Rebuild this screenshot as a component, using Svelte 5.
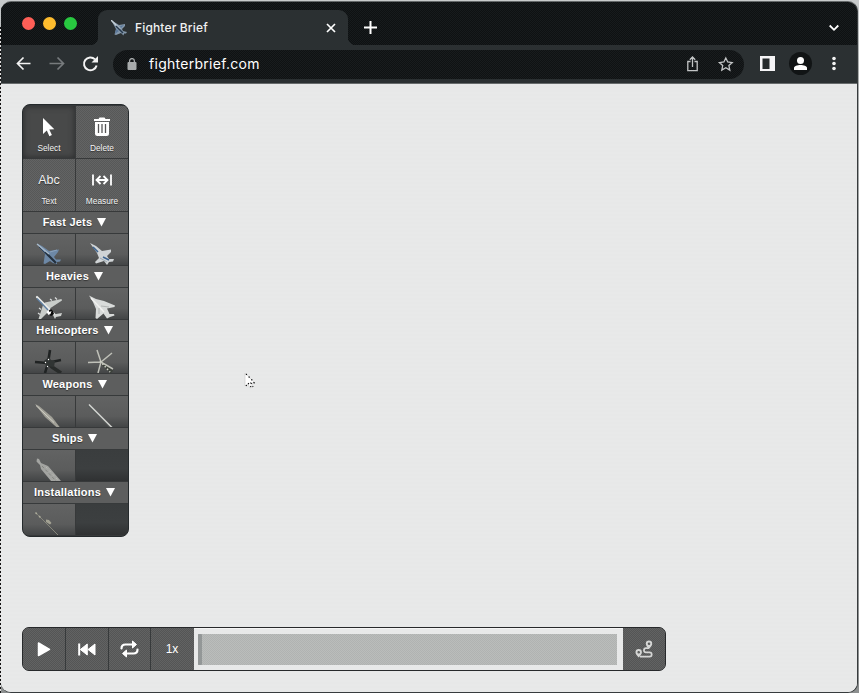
<script>
  const groups = [
    { name: 'Fast Jets', items: ['jet', 'jet2'] },
    { name: 'Heavies', items: ['airliner', 'bomber'] },
    { name: 'Helicopters', items: ['heli', 'heli2'] },
    { name: 'Weapons', items: ['missile', 'missile2'] },
    { name: 'Ships', items: ['carrier', null] },
    { name: 'Installations', items: ['site', null] }
  ];
</script>

<div class="desktop">
  <div class="window">
    <header class="tabs">
      <div class="lights"><i class="red"></i><i class="yellow"></i><i class="green"></i></div>
      <div class="tab">
        <svg class="favicon" width="16" height="16" viewBox="0 0 16 16"><path fill="#8497aa" d="M0 0 8 5 14 4 14 6 11 9 12 11 16 12 15 13.500 13 13.500 12.500 15.500 10 13 5 15 3.500 14.500 5 9Z"/><path fill="#5b789a" d="m5 9 3 2-4 3ZM9 6l4-1-3 3Z"/><path stroke="#c5cfd6" stroke-width="1.400" d="m0 0 9 9"/><path stroke="#26394d" stroke-width="1.500" d="m5 6 7 7"/></svg>
        <span class="title">Fighter Brief</span>
        <svg class="close" width="10" height="10" viewBox="0 0 10 10"><path d="m1 1 8 8M9 1 1 9" stroke="#fff" stroke-width="1.700"/></svg>
      </div>
      <svg class="plus" width="13" height="13" viewBox="0 0 13 13"><path d="M6.500 0v13M0 6.500h13" stroke="#fff" stroke-width="2"/></svg>
      <svg class="chev" width="10" height="8" viewBox="0 0 10 8"><path d="m.7 1.500 4.300 4.300 4.300-4.300" fill="none" stroke="#fff" stroke-width="1.800"/></svg>
    </header>
    <nav class="toolbar">
      <svg width="110" height="38" viewBox="0 0 110 38" fill="none" stroke-width="1.700">
        <path d="M29.500 18.500H17M22.500 12.500l-6 6 6 6" stroke="#f3f3f3"/>
        <path d="M48.500 18.500H62M56.500 12.500l6 6-6 6" stroke="#777b7d"/>
        <path d="M94 14.400a6.400 6.400 0 1 0 1.600 6" stroke="#f3f3f3" stroke-width="2"/><path fill="#f3f3f3" d="M97 11v6.500h-6.500Z"/>
      </svg>
      <div class="address">
        <svg class="lock" width="10" height="12" viewBox="0 0 10 12"><rect x=".5" y="4" width="9" height="8" rx="1" fill="#a8abac"/><path d="M2.600 5V3a2.400 2.400 0 0 1 4.800 0v2" fill="none" stroke="#a8abac" stroke-width="1.300"/></svg>
        <span>fighterbrief.com</span>
        <svg class="pageacts" width="56" height="28" viewBox="0 0 56 28" fill="none" stroke="#c3c5c6" stroke-width="1.300"><path d="M5.500 11.500H2.800v9.200h9.400v-9.200H9.500M7.500 17V7M4.800 9.700 7.500 7l2.700 2.700"/><path d="m40.800 8 1.900 4 4.500.6-3.300 3 .9 4.500-4-2.300-4 2.300.9-4.500-3.300-3 4.500-.6Z"/></svg>
      </div>
      <svg class="right" width="112" height="38" viewBox="0 0 112 38">
        <path fill="#f5f4f6" d="M15 11h15v15H15Z"/><path fill="#25292b" d="M17.500 13.500h7v10.500h-7Z"/>
        <circle cx="55.500" cy="18.500" r="11.500" fill="#111415"/><circle cx="55.500" cy="15.600" r="3.500" fill="#fff"/><path fill="#fff" d="M49 25v-2c0-4 13-4 13 0v2Z"/>
        <g fill="#f2f2f2"><circle cx="89" cy="13.500" r="1.800"/><circle cx="89" cy="18.500" r="1.800"/><circle cx="89" cy="23.500" r="1.800"/></g>
      </svg>
    </nav>
    <main>
      <aside class="palette">
        <div class="pair tools">
          <button class="selected"><svg width="52" height="52" viewBox="0 0 52 52"><path fill="#fff" d="M20 12v16l3.800-3.500 2.600 5.800 2.500-1.200-2.600-5.600 5-.3Z"/></svg><span>Select</span></button>
          <button><svg width="52" height="52" viewBox="0 0 52 52"><path fill="#fff" d="M18 13h4.500l1-1.500h5l1 1.500H34v2H18ZM19 16h14v11.500q0 2.500-2.500 2.500h-9Q19 30 19 27.500Z"/><path stroke="#555" stroke-width="1.300" d="M22.500 18v9M26 18v9M29.500 18v9"/></svg><span>Delete</span></button>
        </div>
        <div class="pair tools">
          <button><b>Abc</b><span>Text</span></button>
          <button><svg width="52" height="52" viewBox="0 0 52 52" fill="none" stroke="#fff" stroke-width="1.800"><path d="M17 15.500v11M35 15.500v11M20.500 21h11M24.500 17l-4 4 4 4M27.500 17l4 4-4 4"/></svg><span>Measure</span></button>
        </div>
        {#each groups as group}
          <section>
            <h2>{group.name}<svg width="9" height="9" viewBox="0 0 9 9"><path d="M0 0h9L4.500 8.500Z" fill="#fff"/></svg></h2>
            <div class="pair craft">
              {#each group.items as item}
                <button class:empty={!item}>
                  <svg width="52" height="31" viewBox="0 0 52 31" fill="none">
                    {#if item === 'jet'}
                      <path fill="#6d88a6" d="M14 9.500 19 12 26 17 36 15.500 35 18 31 23 33 25.500 38 25.500 37 27.500 34 28 34 30 30 29 27 27 22 30 20.500 29.500 22 20Z"/><path stroke="#23303e" stroke-width="2.200" d="m22 18 11 11"/><path stroke="#a9bac9" stroke-width="1.300" d="m14 10 12 10"/><path stroke="#2f445d" d="m16 13 8 8"/><path stroke="#8ba3bd" d="m27 18 7-2"/>
                    {:else if item === 'jet2'}
                      <path fill="#d0d4d6" d="M14 9 20 12 26 17 35 15.500 35 18 31 22 33 25 38 25 37 27.500 33 28 31 31 28 27 20 29.500 19 28 23 24 21 19Z"/><path stroke="#3e648f" stroke-width="1.600" d="m17 13 5 5M27 23l6 3"/><path stroke="#9ba9b4" d="m24 24 7 4"/>
                    {:else if item === 'airliner'}
                      <path fill="#c9cdca" d="M22 14.500 38.500 11 39 12.500 27.500 20 26 23 18 31 15.500 31 20 17Z"/><path fill="#ced1cf" d="m29 25 4 1 6-1-1 3-5 1-1 2Z"/><path stroke="#e8eae8" stroke-width="2.200" stroke-linecap="round" d="m14 9 17 17"/><path stroke="#5c7da0" stroke-width="1.300" d="m14 10.500 11 11.500"/><path stroke="#dadddd" stroke-width="1.200" d="m27 11 2 1.500M32 9.500l2 2M16 20l2 1.500M15 25l2 1.500"/><path fill="#090909" d="m25 23 3-2 2 2 1 3-3 2-3-2Z"/><path fill="#fff" d="m23.500 24 2-2 1 2 2-1-1 3-2 1Z"/>
                    {:else if item === 'bomber'}
                      <path fill="#d9dbda" d="M13 7.500 20 11 28 13 39 17.500 38.500 19 31 20.500 33.500 26 38 26 38.500 27.500 34 29 31 30.500 27.500 25.500 21 31 19.500 30 20 21 17 14Z"/><path stroke="#f1f1ef" stroke-width="1.500" d="m15 10 13 14"/><path stroke="#b1b4b3" d="m25 18 8 1M23 20v6"/>
                    {:else if item === 'heli'}
                      <path stroke="#202323" stroke-width="2.600" d="M12 20 24 21 38 18M27 8 25 21 22 31"/><path stroke="#282b2a" stroke-width="3.600" d="m22 19 7 6 9 6"/><path fill="#303433" d="m21 19 5-4 2 3 4 1-1 6-8-1Z"/><g fill="#fff"><circle cx="22.500" cy="20.500" r=".7"/><circle cx="24.500" cy="24.500" r=".7"/><circle cx="25.500" cy="17.500" r=".7"/></g>
                    {:else if item === 'heli2'}
                      <path stroke="#3c413b" stroke-width="3.600" d="m24 19 12 11"/><path stroke="#bfc0b8" stroke-width="1.500" d="M12 20.500 25 20 36 11M21 8 25 20 22 31M25 20l12 7"/><path stroke="#d0d3c8" stroke-width="1.600" stroke-dasharray="1.500 2" d="m24 19 10 11"/>
                    {:else if item === 'missile'}
                      <path fill="#a2a198" d="m12 8 4 2L29 21l8 10.500-2.500.5L22 21Z"/><path stroke="#d0cfc5" d="m13 9.500 18 17"/>
                    {:else if item === 'missile2'}
                      <path stroke="#555958" stroke-width="1.200" d="m12 9.500 23 22.500"/><path stroke="#d4d5d2" stroke-width="1.500" d="m13 8.500 23 23"/>
                    {:else if item === 'carrier'}
                      <path fill="#a3a4a1" d="m14 8.500 2 .5 2 4 7 3 13 15H28L18 19l-1-4-3.500-3.500Z"/><path stroke="#838580" stroke-dasharray="3 2" d="m19 16 14 15"/><path stroke="#b9bab4" stroke-dasharray="2 3" d="m23 17 12 13"/>
                    {:else if item === 'site'}
                      <path stroke="#85857a" d="m13 9 22 22"/><path stroke="#aeae9d" stroke-width="1.500" stroke-dasharray="2 3" d="m12.500 8.500 5 5"/><path fill="#a3a293" d="m23 15.500 3 .5 2.500 3-1.500 1.500-4-2.500Z"/>
                    {/if}
                  </svg>
                </button>
              {/each}
            </div>
          </section>
        {/each}
      </aside>
      <footer class="player">
        <button><svg width="42" height="42" viewBox="0 0 42 42"><path fill="#fff" stroke="#fff" stroke-width="1.500" stroke-linejoin="round" d="M15.500 15v12.500l11-6.200Z"/></svg></button>
        <button><svg width="42" height="42" viewBox="0 0 42 42"><path fill="#fff" stroke="#fff" stroke-linejoin="round" d="M21.300 16v11l-7-5.500ZM29 16v11l-7-5.500Z"/><path stroke="#fff" stroke-width="2" d="M13.200 15.500v12"/></svg></button>
        <button class="loop"><svg width="41" height="42" viewBox="0 0 41 42"><path d="M12.500 20.500c0-3 2-4 4-4h7M28.500 21.500c0 3-2 4-4 4h-7" fill="none" stroke="#fff" stroke-width="2.200" stroke-linecap="round"/><path fill="#fff" stroke="#fff" stroke-linejoin="round" d="m23.500 13 4 3.500-4 3.500ZM17.500 22 13.500 25.500l4 3.500Z"/></svg></button>
        <button class="speed">1x</button>
        <div class="timeline"><div class="track"><i></i></div></div>
        <button class="route"><svg width="42" height="42" viewBox="0 0 42 42"><path d="M26 20.200h-3a2 2 0 0 0 0 4.100h3.500a2.200 2.200 0 0 1 0 4.400H17" fill="none" stroke="#d5d6d5" stroke-width="1.700"/><path fill="#d5d6d5" fill-rule="evenodd" d="M26 21c-2-2-3.200-3.600-3.200-5.300a3.200 3.200 0 0 1 6.400 0c0 1.700-1.200 3.300-3.200 5.300Zm0-6.600a1.300 1.300 0 1 0 0 2.600 1.300 1.300 0 0 0 0-2.600ZM15.700 29.600c-2-2-3.200-3.600-3.200-5.300a3.200 3.200 0 0 1 6.400 0c0 1.700-1.200 3.300-3.200 5.300Zm0-6.600a1.300 1.300 0 1 0 0 2.600 1.300 1.300 0 0 0 0-2.600Z"/></svg></button>
      </footer>
      <svg class="cursor" width="14" height="18" viewBox="0 0 14 18"><path d="M1 1v13l3-2 2 4 2-1v-4h3Z" fill="#fff" stroke="#c8c8c8" stroke-width=".6"/><path d="m2 2 8 8v1H7l2 4M2 14l2-3 3 4" fill="none" stroke="#080808" stroke-width="1.200" stroke-dasharray="1.200 2.600"/></svg>
    </main>
  </div>
</div>

<style>
  :global(body) { margin: 0; }
  * { box-sizing: border-box; }
  svg { display: block; }
  button { appearance: none; border: 0; margin: 0; padding: 0; color: #fff; font-family: "Liberation Sans", Arial, sans-serif; }
  .desktop { position: relative; width: 859px; height: 693px; padding: 1px 1px 0; background: linear-gradient(#c8cbcc, #aaadad 10%, #8c8f8f); overflow: hidden; }
  .desktop::before { content: ''; position: absolute; left: 0; top: 27px; width: 1px; height: 666px; background: repeating-linear-gradient(#111 0 2px, #ddd 2px 4px); }
  .window { width: 857px; height: 692px; border: 1px solid #373b3d; border-top-color: #65696a; border-left-width: 0; border-radius: 10px; overflow: hidden; background: #e7e8e8; }
  .tabs { position: relative; display: flex; align-items: flex-end; height: 43px; background-color: #111415; background-image: repeating-conic-gradient(#171b1d 0 25%, #0e1112 0 50%); background-size: 2px 2px; }
  .lights { display: flex; gap: 8px; width: 97px; height: 43px; padding: 15px 0 0 21px; }
  .lights i { width: 13px; height: 13px; border-radius: 50%; }
  .red { background: #ff5f57; } .yellow { background: #febc2e; } .green { background: #28c840; }
  .tab { position: relative; display: flex; align-items: center; width: 250px; height: 35px; padding: 0 12px 0 13px; border-radius: 9px 9px 0 0; background: #2b3032; }
  .tab::before, .tab::after { content: ''; position: absolute; bottom: 0; width: 8px; height: 8px; }
  .tab::before { left: -8px; background: radial-gradient(circle at 0 0, transparent 8px, #2b3032 8.5px); }
  .tab::after { right: -8px; background: radial-gradient(circle at 100% 0, transparent 8px, #2b3032 8.5px); }
  .title { flex: 1; margin-left: 8px; color: #f0f1f1; font: 500 12px/20px Inter, sans-serif; letter-spacing: .15px; }
  .plus { margin: 0 0 11px 16px; }
  .chev { margin: 0 18px 13px auto; }
  .toolbar { display: flex; align-items: center; height: 39px; background: #2b3032; border-bottom: 1px solid #676b6c; }
  .toolbar > svg { flex: none; }
  .address { display: flex; align-items: center; width: 631px; height: 29px; margin-left: 2px; padding-left: 14px; border-radius: 15px; background-color: #131617; background-image: repeating-conic-gradient(#191c1e 0 25%, #0f1213 0 50%); background-size: 2px 2px; color: #fff; }
  .address span { margin-left: 12px; font: 14px/20px Inter, sans-serif; letter-spacing: .28px; }
  .pageacts { margin-left: auto; margin-right: 3px; }
  .right { margin-left: 1px; }
  main { position: relative; display: flex; flex-direction: column; align-items: flex-start; height: 608px; padding: 20px 21px 21px; justify-content: space-between; background: repeating-linear-gradient(#e8e9e9 0 2px, #e7e8e8 2px 4px); }
  .palette { width: 107px; height: 433px; padding-top: 1px; border: 1px solid #252a2c; border-radius: 8px; overflow: hidden; background: #36393b; }
  .pair { display: flex; }
  .pair button { flex: none; background-color: #5d5e5e; border-bottom: 1px solid #37393a; }
  .pair button:first-child { width: 53px; border-right: 1px solid #37393a; }
  .pair button:last-child { width: 52px; }
  .tools button { position: relative; height: 53px; font-size: 9px; background-image: repeating-conic-gradient(#636464 0 25%, #575858 0 50%); background-size: 2px 2px; }
  .tools span { position: absolute; left: 0; right: 0; bottom: 4px; text-align: center; font: 8.3px/12px "Liberation Sans", sans-serif; color: #f4f4f4; text-shadow: 0 1px 1px #333; }
  .tools b { display: block; margin-top: -11px; font: 12.5px/18px "Liberation Sans", sans-serif; color: #f1f1f1; text-shadow: 0 1px 1px #333; }
  .tools .selected { background: #484949; box-shadow: inset 0 0 6px #282a2b; }
  h2 { display: flex; align-items: center; justify-content: center; gap: 5px; height: 22px; margin: 0; padding: 0 2px 1px 0; border-bottom: 1px solid #373a3b; background: #5d5e5e; color: #fff; font: bold 11px/20px "Liberation Sans", Arial, sans-serif; letter-spacing: .22px; text-shadow: 0 1px 1px #333; }
  .craft button { height: 32px; background: linear-gradient(#626363 0, #5b5c5c 65%, #434546 100%); overflow: hidden; }
  .craft button.empty { background: linear-gradient(#3a3d3e, #3c3f40 60%, #2f3132); }
  .player { display: flex; width: 644px; height: 44px; border: 1px solid #27292b; border-radius: 7px; overflow: hidden; background: #565757; }
  .player button { flex: none; width: 43px; border-right: 1px solid #373a3b; background-color: #5b5c5c; background-image: repeating-conic-gradient(#626363 0 25%, #545555 0 50%); background-size: 2px 2px; }
  .player .loop { width: 42px; }
  .player .speed { width: 43px; border-right: 0; padding-right: 1px; font-size: 12px; }
  .timeline { flex: 1; background: #e8e9e9; border-top: 1px solid #f5f5f5; padding: 5px 6px 5px 4px; }
  .track { height: 31px; background-color: #b5b7b6; background-image: repeating-conic-gradient(#babdbb 0 25%, #b0b2b1 0 50%); background-size: 2px 2px; }
  .track i { display: block; width: 4px; height: 31px; background: #939797; border-radius: 1px; }
  .player .route { width: 42px; border-right: 0; }
  .cursor { position: absolute; left: 243px; top: 288px; }
</style>
